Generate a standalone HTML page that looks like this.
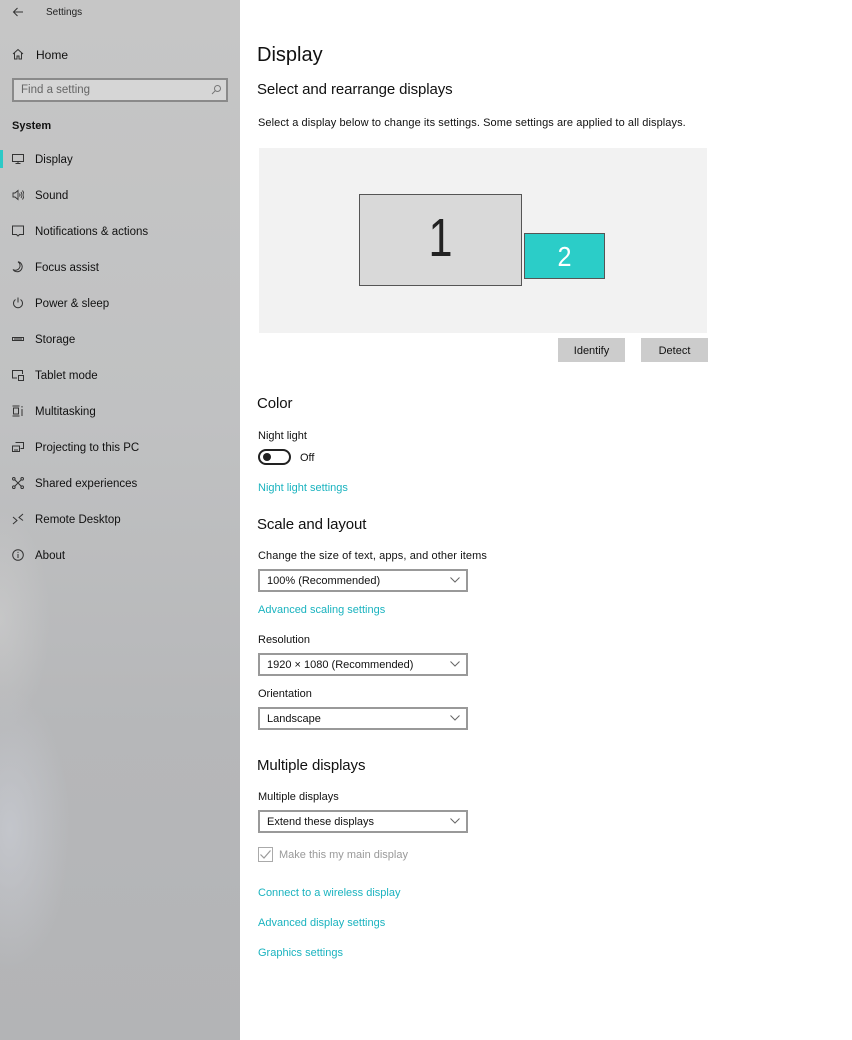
<!DOCTYPE html>
<html><head><meta charset="utf-8"><style>
*{margin:0;padding:0;box-sizing:border-box}
body{width:852px;height:1040px;position:relative;overflow:hidden;background:#fff;font-family:"Liberation Sans",sans-serif;color:#000}
#side{position:absolute;left:0;top:0;width:240px;height:1040px;background:
radial-gradient(ellipse 60px 140px at 10px 830px,rgba(205,208,216,.6),rgba(0,0,0,0)),
radial-gradient(ellipse 50px 110px at 0px 620px,rgba(210,210,210,.5),rgba(0,0,0,0)),
linear-gradient(180deg,#c6c6c6 0%,#c0c1c2 40%,#b6b7b9 70%,#b3b4b6 100%)}
.t{position:absolute;line-height:16px;height:16px;white-space:nowrap;font-size:11px;letter-spacing:0;color:#111}
.nav{font-size:11.5px;color:#111}
.ic{position:absolute;left:12px;width:12px;height:12px}
.h{font-size:15px;letter-spacing:-0.1px;color:#111}
.l{color:#1ab3bf}
.dd{position:absolute;left:258px;width:210px;height:23px;border:2px solid #999;background:#fff}
.dd span{position:absolute;left:7px;top:3px;font-size:11px;line-height:14px;color:#111}
.dd svg{position:absolute;right:6px;top:6px}
</style></head><body>
<div id="side">
<svg style="position:absolute;left:12px;top:7px" width="12" height="10" viewBox="0 0 12 10"><path d="M11 5H1.5M5.5 1 1.5 5l4 4" fill="none" stroke="#333" stroke-width="1"/></svg>
<div class="t" style="left:46px;top:5px;font-size:10px;color:#222">Settings</div>
<svg class="ic" style="top:48px" viewBox="0 0 12 12"><path d="M1 6 6 1.5 11 6M2.5 5v6h2.5V8h2v3h2.5V5" fill="none" stroke="#333"/></svg>
<div class="t nav" style="left:36px;top:47px;font-size:12px">Home</div>
<div style="position:absolute;left:12px;top:78px;width:216px;height:24px;border:2px solid #8a8a8a;background:rgba(225,225,225,.6)"></div>
<div class="t" style="left:21px;top:82px;color:#666;font-size:11.5px">Find a setting</div>
<svg style="position:absolute;left:211px;top:84px" width="11" height="11" viewBox="0 0 11 11"><circle cx="6.5" cy="4.5" r="3" fill="none" stroke="#777"/><path d="M4.3 6.7 1 10" stroke="#777"/></svg>
<div class="t nav" style="left:12px;top:118px;font-weight:bold;font-size:11px">System</div>
<div style="position:absolute;left:0;top:150px;width:3px;height:18px;background:#2cc9c6"></div>
<svg class="ic" style="top:153px" viewBox="0 0 12 12"><path d="M.5 1.5h11v7H.5zM6 8.5v2M3.5 10.5h5" fill="none" stroke="#333"/></svg>
<div class="t nav" style="left:35px;top:152px">Display</div>
<svg class="ic" style="top:189px" viewBox="0 0 12 12"><path d="M1 4h2l3-2.5v9L3 8H1zM7.5 4.5q1 1.5 0 3M9 3q2 3 0 6M10.5 1.5q3 4.5 0 9" fill="none" stroke="#333" stroke-width=".9"/></svg>
<div class="t nav" style="left:35px;top:188px">Sound</div>
<svg class="ic" style="top:225px" viewBox="0 0 12 12"><path d="M.5 1h11v8.5H7.5L6 11 4.5 9.5h-4z" fill="none" stroke="#333"/></svg>
<div class="t nav" style="left:35px;top:224px">Notifications &amp; actions</div>
<svg class="ic" style="top:261px" viewBox="0 0 12 12"><path d="M6 .8A5 5 0 1 1 1 8.5 4.5 4.5 0 0 0 6 .8z" fill="none" stroke="#333"/></svg>
<div class="t nav" style="left:35px;top:260px">Focus assist</div>
<svg class="ic" style="top:297px" viewBox="0 0 12 12"><path d="M3.5 2.5a4.5 4.5 0 1 0 5 0M6 .5v5" fill="none" stroke="#333"/></svg>
<div class="t nav" style="left:35px;top:296px">Power &amp; sleep</div>
<svg class="ic" style="top:333px" viewBox="0 0 12 12"><path d="M.5 4.5h11v3H.5zM2 6h8" fill="none" stroke="#333"/></svg>
<div class="t nav" style="left:35px;top:332px">Storage</div>
<svg class="ic" style="top:369px" viewBox="0 0 12 12"><path d="M5 9H.5V1.5h10V5M6.5 6.5h5v5h-5z" fill="none" stroke="#333"/></svg>
<div class="t nav" style="left:35px;top:368px">Tablet mode</div>
<svg class="ic" style="top:405px" viewBox="0 0 12 12"><path d="M.5 1h7M.5 11h7M1.5 3h5v6h-5zM10 1v1.5M10 4v7" fill="none" stroke="#333"/></svg>
<div class="t nav" style="left:35px;top:404px">Multitasking</div>
<svg class="ic" style="top:441px" viewBox="0 0 12 12"><path d="M3.5 1.5h8v6h-3M.5 5h7v5.5h-7zM2 9h4" fill="none" stroke="#333"/></svg>
<div class="t nav" style="left:35px;top:440px">Projecting to this PC</div>
<svg class="ic" style="top:477px" viewBox="0 0 12 12"><path d="M2.5 2.5l7 7M9.5 2.5l-7 7" stroke="#333"/><circle cx="1.8" cy="1.8" r="1.3" fill="none" stroke="#333"/><circle cx="10.2" cy="1.8" r="1.3" fill="none" stroke="#333"/><circle cx="1.8" cy="10.2" r="1.3" fill="none" stroke="#333"/><circle cx="10.2" cy="10.2" r="1.3" fill="none" stroke="#333"/></svg>
<div class="t nav" style="left:35px;top:476px">Shared experiences</div>
<svg class="ic" style="top:513px" viewBox="0 0 12 12"><path d="M1 4l4 3.5-4 3.5M11 1 7 4.5l4 3" fill="none" stroke="#333"/></svg>
<div class="t nav" style="left:35px;top:512px">Remote Desktop</div>
<svg class="ic" style="top:549px" viewBox="0 0 12 12"><circle cx="6" cy="6" r="5.3" fill="none" stroke="#333"/><path d="M6 5v4" stroke="#333"/><circle cx="6" cy="3.3" r=".6" fill="#333"/></svg>
<div class="t nav" style="left:35px;top:548px">About</div>
</div>

<div class="t" style="left:257px;top:42px;font-size:20px;line-height:26px;height:26px;color:#111">Display</div>
<div class="t h" style="left:257px;top:81px;line-height:18px;height:18px">Select and rearrange displays</div>
<div class="t" style="left:258px;top:115px;letter-spacing:0.08px">Select a display below to change its settings. Some settings are applied to all displays.</div>

<div style="position:absolute;left:259px;top:148px;width:448px;height:185px;background:#f2f2f2"></div>
<div style="position:absolute;left:359px;top:194px;width:163px;height:92px;background:#d9d9d9;border:1.5px solid #555"></div>
<div class="t" style="left:359px;top:208px;width:163px;text-align:center;font-size:54px;line-height:60px;height:60px;color:#222;transform:scaleX(.8)">1</div>
<div style="position:absolute;left:524px;top:233px;width:81px;height:46px;background:#2bcdc8;border:1.5px solid #555"></div>
<div class="t" style="left:524px;top:240px;width:81px;text-align:center;font-size:28px;line-height:34px;height:34px;color:#fff;transform:scaleX(.9)">2</div>
<div style="position:absolute;left:558px;top:338px;width:67px;height:24px;background:#ccc"></div>
<div class="t" style="left:558px;top:343px;width:67px;text-align:center">Identify</div>
<div style="position:absolute;left:641px;top:338px;width:67px;height:24px;background:#ccc"></div>
<div class="t" style="left:641px;top:343px;width:67px;text-align:center">Detect</div>

<div class="t h" style="left:257px;top:396px">Color</div>
<div class="t" style="left:258px;top:428px">Night light</div>
<div style="position:absolute;left:258px;top:449px;width:33px;height:16px;border:2px solid #222;border-radius:8px"></div>
<div style="position:absolute;left:263px;top:453px;width:8px;height:8px;border-radius:4px;background:#222"></div>
<div class="t" style="left:300px;top:450px">Off</div>
<div class="t l" style="left:258px;top:480px">Night light settings</div>

<div class="t h" style="left:257px;top:517px">Scale and layout</div>
<div class="t" style="left:258px;top:548px;letter-spacing:0.1px">Change the size of text, apps, and other items</div>
<div class="dd" style="top:569px"><span>100% (Recommended)</span><svg width="10" height="6" viewBox="0 0 10 6"><path d="M.5.5 5 5 9.5.5" fill="none" stroke="#666"/></svg></div>
<div class="t l" style="left:258px;top:602px">Advanced scaling settings</div>
<div class="t" style="left:258px;top:632px">Resolution</div>
<div class="dd" style="top:653px"><span>1920 × 1080 (Recommended)</span><svg width="10" height="6" viewBox="0 0 10 6"><path d="M.5.5 5 5 9.5.5" fill="none" stroke="#666"/></svg></div>
<div class="t" style="left:258px;top:686px">Orientation</div>
<div class="dd" style="top:707px"><span>Landscape</span><svg width="10" height="6" viewBox="0 0 10 6"><path d="M.5.5 5 5 9.5.5" fill="none" stroke="#666"/></svg></div>

<div class="t h" style="left:257px;top:758px">Multiple displays</div>
<div class="t" style="left:258px;top:789px">Multiple displays</div>
<div class="dd" style="top:810px"><span>Extend these displays</span><svg width="10" height="6" viewBox="0 0 10 6"><path d="M.5.5 5 5 9.5.5" fill="none" stroke="#666"/></svg></div>
<div style="position:absolute;left:258px;top:847px;width:15px;height:15px;border:1.5px solid #aaa"></div>
<svg style="position:absolute;left:259px;top:849px" width="13" height="11" viewBox="0 0 13 11"><path d="M1.5 5.5 5 9l6.5-7.5" fill="none" stroke="#999" stroke-width="1.2"/></svg>
<div class="t" style="left:279px;top:847px;color:#999">Make this my main display</div>
<div class="t l" style="left:258px;top:885px">Connect to a wireless display</div>
<div class="t l" style="left:258px;top:915px">Advanced display settings</div>
<div class="t l" style="left:258px;top:945px">Graphics settings</div>
</body></html>
